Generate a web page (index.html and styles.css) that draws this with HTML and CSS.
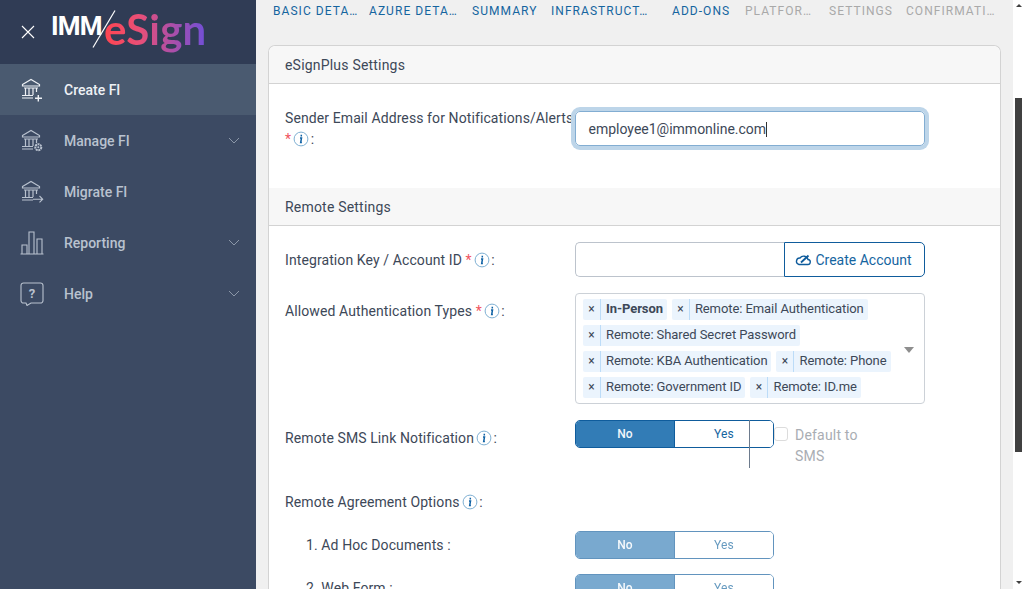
FILE: index.html
```html
<!DOCTYPE html>
<html lang="en">
<head>
<meta charset="utf-8">
<title>eSignPlus Settings</title>
<link rel="stylesheet" href="styles.css">
</head>
<body>
<svg class="defs" width="0" height="0">
  <symbol id="bank" viewBox="0 1 24 24">
    <path d="M2.500 7.500 11 2.500l8.500 5v1.500h-17zM4 11h14M5.500 11v7M9 11v7M13 11v7M16.500 11v4M2 18.500h11M2 21h11" fill="none" stroke="currentColor" stroke-width="1.200"/>
  </symbol>
  <symbol id="info" viewBox="0 0 16 16">
    <circle cx="8" cy="8" r="6.900" fill="#fff" stroke="#7fb0d3" stroke-width="1"/>
    <path d="M8.300 3.700v1.700M7 7h1.500l-.8 4.500h1.200" fill="none" stroke="#0f62a5" stroke-width="1.500"/>
  </symbol>
</svg>
<div class="app">
  <aside class="sidebar">
    <header class="brand">
      <svg class="close" viewBox="0 0 14 14" width="14" height="14"><path d="M1 1l12 12M13 1 1 13" stroke="#fff" stroke-width="1.100" fill="none"/></svg>
      <div class="logo">
        <span class="imm">IMM</span>
        <span class="esign">eSign</span>
        <svg class="slash" viewBox="0 0 24 38" width="24" height="38"><path d="M23 0.500 1 37.500" stroke="#fff" stroke-width="1.200" fill="none"/></svg>
      </div>
    </header>
    <nav class="menu">
      <a class="item active">
        <svg class="ico" viewBox="0 0 24 24" width="24" height="24"><use href="#bank"/><path d="M18.300 17v6.500M15 20.250h7" stroke="currentColor" stroke-width="1.400" fill="none"/></svg>
        <span class="lbl">Create FI</span>
      </a>
      <a class="item">
        <svg class="ico" viewBox="0 0 24 24" width="24" height="24"><use href="#bank"/><circle cx="18.300" cy="18.200" r="3" fill="none" stroke="currentColor" stroke-width="2" stroke-dasharray="2 .6"/><circle cx="18.300" cy="18.200" r="1" fill="currentColor"/></svg>
        <span class="lbl">Manage FI</span>
        <svg class="chev" viewBox="0 0 12 7" width="12" height="7"><path d="M1 1l5 5 5-5" fill="none" stroke="currentColor"/></svg>
      </a>
      <a class="item">
        <svg class="ico" viewBox="0 0 24 24" width="24" height="24"><use href="#bank"/><path d="M13 19.200h9.500M19.500 16l3.200 3.200-3.200 3.200" fill="none" stroke="currentColor" stroke-width="1.100"/></svg>
        <span class="lbl">Migrate FI</span>
      </a>
      <a class="item">
        <svg class="ico" viewBox="0 0 24 24" width="24" height="24"><path d="M.5 23h23M2 23v-9h5v9M9 23V1h5v22M17 23V8h5v15" fill="none" stroke="currentColor" stroke-width="1.100"/></svg>
        <span class="lbl">Reporting</span>
        <svg class="chev" viewBox="0 0 12 7" width="12" height="7"><path d="M1 1l5 5 5-5" fill="none" stroke="currentColor"/></svg>
      </a>
      <a class="item">
        <svg class="ico" viewBox="0 0 24 24" width="24" height="24"><path d="M3.500 1h17A2.500 2.500 0 0 1 23 3.500v15a2.500 2.500 0 0 1-2.500 2.500H11l-4 2.500L6 21H3.500A2.500 2.500 0 0 1 1 18.500v-15A2.500 2.500 0 0 1 3.500 1z" fill="none" stroke="currentColor" stroke-width="1.100"/><text x="12" y="16" class="qmark">?</text></svg>
        <span class="lbl">Help</span>
        <svg class="chev" viewBox="0 0 12 7" width="12" height="7"><path d="M1 1l5 5 5-5" fill="none" stroke="currentColor"/></svg>
      </a>
    </nav>
  </aside>

  <main class="main">
    <div class="tabs">
      <span class="tab">BASIC DETA…</span>
      <span class="tab">AZURE DETA…</span>
      <span class="tab">SUMMARY</span>
      <span class="tab">INFRASTRUCT…</span>
      <span class="tab">ADD-ONS</span>
      <span class="tab off">PLATFOR…</span>
      <span class="tab off">SETTINGS</span>
      <span class="tab off">CONFIRMATI…</span>
    </div>

    <section class="card">
      <h2 class="card-head first">eSignPlus Settings</h2>
      <div class="row row-email">
        <div class="label">Sender Email Address for Notifications/Alerts <span class="req">*</span><svg class="info" width="16" height="16"><use href="#info"/></svg> :</div>
        <div class="email">employee1@immonline.com<i class="caret"></i></div>
      </div>
      <h2 class="card-head">Remote Settings</h2>
      <div class="row row-key">
        <div class="label">Integration Key / Account ID <span class="req">*</span><svg class="info" width="16" height="16"><use href="#info"/></svg> :</div>
        <div class="group">
          <div class="keybox"></div>
          <div class="keybtn">
            <svg viewBox="0 0 16 12" width="16" height="12"><path d="M4 10.500h8.500a2.500 2.500 0 0 0 .5-5A4.500 4.500 0 0 0 5 4 3.300 3.300 0 0 0 4 10.500z" fill="none" stroke="#0f5c9c" stroke-width="1.400"/><path d="M6 8.500 13.500 1.500" stroke="#0f5c9c" stroke-width="1.800"/></svg>
            Create Account
          </div>
        </div>
      </div>
      <div class="row row-auth">
        <div class="label">Allowed Authentication Types <span class="req">*</span><svg class="info" width="16" height="16"><use href="#info"/></svg> :</div>
        <div class="multi">
          <div class="chips">
            <span class="chip"><b class="x">×</b><span class="strong">In-Person</span></span>
            <span class="chip"><b class="x">×</b><span>Remote: Email Authentication</span></span>
            <span class="chip"><b class="x">×</b><span>Remote: Shared Secret Password</span></span>
            <span class="chip"><b class="x">×</b><span>Remote: KBA Authentication</span></span>
            <span class="chip"><b class="x">×</b><span>Remote: Phone</span></span>
            <span class="chip"><b class="x">×</b><span>Remote: Government ID</span></span>
            <span class="chip"><b class="x">×</b><span>Remote: ID.me</span></span>
          </div>
          <i class="arrow"></i>
        </div>
      </div>
      <div class="row row-sms">
        <div class="label">Remote SMS Link Notification<svg class="info" width="16" height="16"><use href="#info"/></svg> :</div>
        <div class="sms">
          <div class="toggle"><span class="on">No</span><span class="offb">Yes</span><i class="cursor"></i></div>
          <i class="check"></i>
          <span class="default">Default to SMS</span>
        </div>
      </div>
      <div class="row row-opts">
        <div class="label">Remote Agreement Options<svg class="info" width="16" height="16"><use href="#info"/></svg> :</div>
      </div>
      <div class="row row-sub">
        <div class="label sub">1. Ad Hoc Documents :</div>
        <div class="toggle dim"><span class="on">No</span><span class="offb">Yes</span></div>
      </div>
      <div class="row row-sub">
        <div class="label sub">2. Web Form :</div>
        <div class="toggle dim"><span class="on">No</span><span class="offb">Yes</span></div>
      </div>
    </section>
  </main>

  <div class="scrollbar">
    <i class="up"></i>
    <i class="thumb"></i>
    <i class="down"></i>
  </div>
</div>
</body>
</html>
```

FILE: styles.css
```css
* { box-sizing: border-box; }
html, body { margin: 0; height: 100%; overflow: hidden; }
body { font-family: Roboto, "Liberation Sans", sans-serif; font-size: 14px; color: #3d4858; }
.defs { position: absolute; }
.app { display: flex; height: 589px; width: 1024px; }

/* sidebar */
.sidebar { width: 256px; flex: none; background: #3c4a63; }
.brand { height: 64px; background: #303c55; display: flex; align-items: center; padding-left: 21px; position: relative; }
.close { flex: none; }
.logo { margin-left: 16px; display: flex; align-items: baseline; position: relative; height: 64px; }
.imm { font-family: Roboto, sans-serif; font-weight: 700; font-size: 26px; letter-spacing: -.8px; color: #fff; line-height: 64px; width: 53px; transform: translateY(-10px); }
.esign { font-family: Lato, Roboto, sans-serif; font-weight: 700; font-size: 42px; line-height: 64px; margin-top: -3px; letter-spacing: .2px;
  background: linear-gradient(90deg, #ff4550 0%, #e84f78 35%, #a54fae 70%, #6e4fd8 100%); -webkit-background-clip: text; background-clip: text; color: transparent; }
.slash { position: absolute; left: 41px; top: 10px; }
.item { height: 51px; display: flex; align-items: center; padding-left: 20px; color: #b9c2cf; position: relative; }
.item.active { background: #4a5a70; color: #eef1f5; }
.ico { flex: none; }
.lbl { margin-left: 20px; font-weight: 500; font-size: 14px; }
.chev { position: absolute; left: 228px; top: 22px; color: #8b97a8; }
.qmark { font: 700 13px Roboto, sans-serif; fill: currentColor; text-anchor: middle; }

/* main */
.main { flex: 1; background: #f0f0f0; padding: 0 12px; overflow: hidden; min-width: 0; }
.tabs { display: grid; grid-template-columns: 96px 103px 79px 121px 73px 84px 77px 95px; margin-left: 5px; height: 45px; padding-top: 4px; }
.tab { font-size: 12px; line-height: 15px; height: 15px; letter-spacing: 1.050px; color: #15659f; white-space: nowrap; }
.tab.off { color: #a9a9a9; }

.card { width: 733px; background: #fff; border: 1px solid #d3d3d3; border-bottom: 0; border-radius: 7px 7px 0 0; }
.card-head { margin: 0; height: 38px; padding: 0 16px; font-size: 14px; font-weight: 400; line-height: 38px; letter-spacing: .2px; background: #f7f7f7; border-bottom: 1px solid #d3d3d3; color: #3d4858; }
.card-head.first { border-radius: 7px 7px 0 0; }

.row { display: flex; padding-left: 16px; }
.label { width: 290px; flex: none; line-height: 21px; letter-spacing: .1px; color: #3d4858; }
.req { color: #f0555f; }
.info { vertical-align: -3px; margin-left: 2px; margin-right: -2px; }

.row-email { height: 104px; padding-top: 27px; }
.row-email .label { margin-top: -3px; }
.email { width: 350px; height: 35px; border: 1px solid #82add2; border-radius: 5px; box-shadow: 0 0 0 4px #bdd5e9; padding: 0 12.500px; line-height: 34px; font-size: 14px; color: #3d4858; }
.caret { display: inline-block; width: 1px; height: 15px; background: #333; vertical-align: -3px; }

.row-key { height: 67px; padding-top: 16px; }
.row-key .label { padding-top: 8px; }
.group { display: flex; width: 350px; height: 35px; }
.keybox { flex: 1; border: 1px solid #bcc3cc; border-right: 0; border-radius: 5px 0 0 5px; background: #fff; }
.keybtn { width: 141px; border: 1px solid #0f5c9c; border-radius: 0 5px 5px 0; color: #15659f; display: flex; align-items: center; justify-content: center; gap: 4px; letter-spacing: 0; white-space: nowrap; padding-right: 2px; }

.row-auth { height: 127px; }
.row-auth .label { padding-top: 8px; }
.multi { width: 350px; height: 111px; border: 1px solid #ccd1d7; border-radius: 4px; padding: 5px 7px; position: relative; }
.chips { display: flex; flex-wrap: wrap; gap: 5px; width: 316px; }
.chip { display: flex; height: 21px; background: #ebf4fd; border-radius: 2px; font-size: 13px; line-height: 20px; letter-spacing: -.08px; color: #3d4858; }
.x { width: 18px; text-align: center; font-weight: 400; font-size: 12px; border-right: 1px solid #bcdcf8; flex: none; }
.chip span { padding: 0 4px 0 5px; white-space: nowrap; }
.strong { font-weight: 700; }
.arrow { position: absolute; left: 328px; top: 53px; width: 0; height: 0; border: 5px solid transparent; border-top: 6px solid #8e8e8e; border-bottom: 0; }

.row-sms { height: 72px; }
.row-sms .label { padding-top: 8px; }
.sms { display: flex; width: 350px; align-items: flex-start; }
.toggle { width: 199px; height: 28px; border: 1px solid #0f5c9c; border-radius: 5px; display: flex; font-size: 12px; line-height: 26px; letter-spacing: .2px; text-align: center; position: relative; flex: none; }
.on { width: 99px; background: #327cb6; color: #f1f6fb; border-radius: 4px 0 0 4px; border-right: 1px solid #0f5c9c; font-weight: 500; }
.offb { flex: 1; background: #fff; color: #15659f; border-radius: 0 4px 4px 0; }
.cursor { position: absolute; left: 173px; top: -1px; width: 1px; height: 48px; background: #6d7b8d; }
.check { width: 14px; height: 14px; border: 1px solid #dcdcdc; border-radius: 3px; margin: 7px 0 0 0; flex: none; background: #fff; }
.default { width: 80px; margin: 5px 0 0 7px; line-height: 21px; color: #a9adb3; letter-spacing: .2px; }

.row-opts { height: 39px; }
.row-sub { height: 43px; }
.row-sub .label { padding-top: 4px; }
.sub { padding-left: 21px; }
.toggle.dim { opacity: .65; }

/* scrollbar */
.scrollbar { width: 11px; flex: none; background: #fff; position: relative; }
.up { position: absolute; left: 3px; top: 4px; width: 0; height: 0; border: 3px solid transparent; border-bottom: 3px solid #404040; border-top: 0; }
.down { position: absolute; left: 3px; top: 581px; width: 0; height: 0; border: 3px solid transparent; border-top: 3px solid #404040; border-bottom: 0; }
.thumb { position: absolute; left: 2px; top: 98px; width: 7px; height: 354px; background: #404040; }
```
